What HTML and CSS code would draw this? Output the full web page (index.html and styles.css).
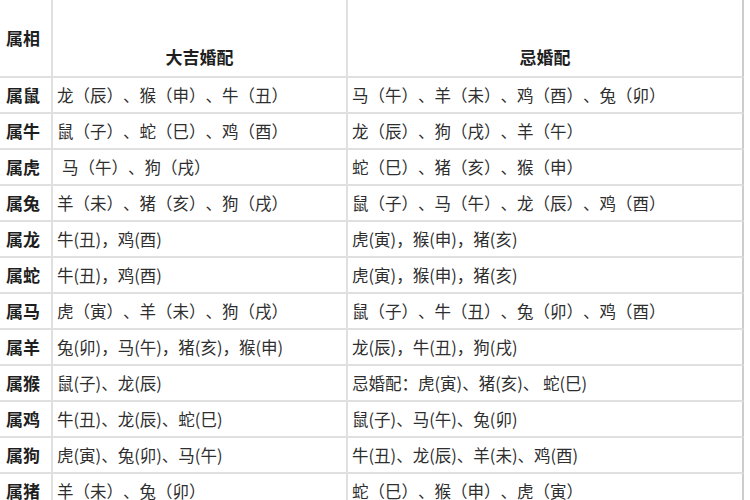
FILE: index.html
```html
<!DOCTYPE html>
<html lang="zh-CN">
<head>
<meta charset="utf-8">
<title>属相婚配表</title>
<link rel="stylesheet" href="styles.css">
</head>
<body>
<div class="grid">
  <div class="cell head first"><span>属相</span></div>
  <div class="cell head title">大吉婚配</div>
  <div class="cell head title last">忌婚配</div>

  <div class="cell first">属鼠</div>
  <div class="cell">龙（辰）、猴（申）、牛（丑）</div>
  <div class="cell last">马（午）、羊（未）、鸡（酉）、兔（卯）</div>

  <div class="cell first">属牛</div>
  <div class="cell">鼠（子）、蛇（巳）、鸡（酉）</div>
  <div class="cell last">龙（辰）、狗（戌）、羊（午）</div>

  <div class="cell first">属虎</div>
  <div class="cell indent">马（午）、狗（戌）</div>
  <div class="cell last">蛇（巳）、猪（亥）、猴（申）</div>

  <div class="cell first">属兔</div>
  <div class="cell">羊（未）、猪（亥）、狗（戌）</div>
  <div class="cell last">鼠（子）、马（午）、龙（辰）、鸡（酉）</div>

  <div class="cell first">属龙</div>
  <div class="cell">牛(丑)，鸡(酉)</div>
  <div class="cell last">虎(寅)，猴(申)，猪(亥)</div>

  <div class="cell first">属蛇</div>
  <div class="cell">牛(丑)，鸡(酉)</div>
  <div class="cell last">虎(寅)，猴(申)，猪(亥)</div>

  <div class="cell first">属马</div>
  <div class="cell">虎（寅）、羊（未）、狗（戌）</div>
  <div class="cell last">鼠（子）、牛（丑）、兔（卯）、鸡（酉）</div>

  <div class="cell first">属羊</div>
  <div class="cell">兔(卯)，马(午)，猪(亥)，猴(申)</div>
  <div class="cell last">龙(辰)，牛(丑)，狗(戌)</div>

  <div class="cell first">属猴</div>
  <div class="cell">鼠(子)、龙(辰)</div>
  <div class="cell last">忌婚配：虎(寅)、猪(亥)、 蛇(巳)</div>

  <div class="cell first">属鸡</div>
  <div class="cell">牛(丑)、龙(辰)、蛇(巳)</div>
  <div class="cell last">鼠(子)、马(午)、兔(卯)</div>

  <div class="cell first">属狗</div>
  <div class="cell">虎(寅)、兔(卯)、马(午)</div>
  <div class="cell last">牛(丑)、龙(辰)、羊(未)、鸡(酉)</div>

  <div class="cell first">属猪</div>
  <div class="cell">羊（未）、兔（卯）</div>
  <div class="cell last">蛇（巳）、猴（申）、虎（寅）</div>
</div>
</body>
</html>
```

FILE: styles.css
```css
html, body {
  margin: 0;
  padding: 0;
  background: #ffffff;
  overflow: hidden;
}

body {
  font-family: "Noto Sans CJK SC", "Noto Sans", sans-serif;
  color: #2e2e2e;
  text-spacing-trim: space-all;
}

.grid {
  display: grid;
  grid-template-columns: 53px 295px 396px;
  grid-template-rows: 78px repeat(12, 36px);
}

.cell {
  box-sizing: border-box;
  display: flex;
  align-items: center;
  border-right: 2px solid #e0e0e0;
  border-bottom: 2px solid #e0e0e0;
  padding-left: 4px;
  font-size: 16.5px;
  line-height: 20px;
  white-space: nowrap;
  overflow: hidden;
}

.cell.first {
  padding-left: 6px;
  font-size: 17px;
  font-weight: bold;
  color: #1e1e1e;
}

.cell.last {
  border-right: 2px solid #cdcdcd;
}

.cell.indent {
  padding-left: 9px;
}

.head.title {
  justify-content: center;
  align-items: flex-end;
  padding-left: 0;
  padding-bottom: 9px;
  font-size: 17px;
  font-weight: bold;
  color: #1e1e1e;
}
```
